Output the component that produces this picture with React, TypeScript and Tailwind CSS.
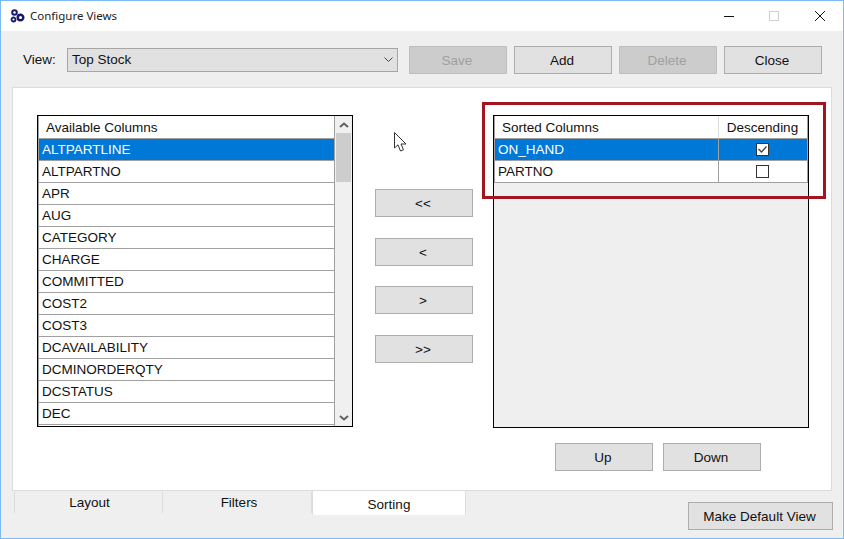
const columns = ["ALTPARTLINE","ALTPARTNO","APR","AUG","CATEGORY","CHARGE","COMMITTED","COST2","COST3","DCAVAILABILITY","DCMINORDERQTY","DCSTATUS","DEC"];

function Btn({ label, disabled, className = "" }: { label: string; disabled?: boolean; className?: string }) {
  return (
    <div className={`flex h-[28px] w-[98px] shrink-0 items-center justify-center border pr-[2px] pt-[2px] ${disabled ? "border-[#bfbfbf] bg-[#cccccc] text-[#a0a0a0]" : "border-[#adadad] bg-[#e1e1e1] text-[#111]"} ${className}`}>
      {label}
    </div>
  );
}

function Chevron({ up }: { up?: boolean }) {
  return (
    <svg width="10" height="6" viewBox="0 0 10 6" fill="none">
      <path d={up ? "M1 5 L5 1.5 L9 5" : "M1 1 L5 4.5 L9 1"} stroke="#606060" strokeWidth="2" />
    </svg>
  );
}

export default function App() {
  return (
    <div className="relative flex h-[539px] w-[844px] flex-col overflow-hidden border border-[#7db9f5] bg-[#efefef] font-['Liberation_Sans',sans-serif] text-[13.5px] text-[#111]">
      {/* Title bar */}
      <div className="flex h-[30px] shrink-0 items-center bg-white pl-[9px]">
        <svg width="15" height="14" viewBox="0 0 15 14" fill="none" stroke="#17176b">
          <circle cx="4.5" cy="3.5" r="2.3" strokeWidth="2" />
          <circle cx="3.5" cy="10.5" r="2" strokeWidth="1.8" />
          <circle cx="10.5" cy="8.5" r="2.8" strokeWidth="2.4" />
        </svg>
        <span className="ml-[5px] font-['Noto_Sans',sans-serif] text-[11.5px] text-[#222]">Configure Views</span>
        <div className="ml-auto flex items-center">
          <svg width="10" height="10" viewBox="0 0 10 10" className="mr-[35px]"><path d="M0 5.5H10" stroke="#111" strokeWidth="1" /></svg>
          <svg width="10" height="10" viewBox="0 0 10 10" className="mr-[36px]"><rect x="0.5" y="0.5" width="9" height="9" fill="none" stroke="#cfcfcf" /></svg>
          <svg width="10" height="10" viewBox="0 0 10 10" className="mr-[18px]"><path d="M0 0L10 10M10 0L0 10" stroke="#111" strokeWidth="1" /></svg>
        </div>
      </div>

      {/* Toolbar */}
      <div className="flex h-[56px] shrink-0 items-center pl-[22px] pt-[2px]">
        <span className="w-[44px] pt-px">View:</span>
        <div className="flex h-[24px] w-[331px] items-center justify-between border border-[#a6a6a6] bg-[#e1e1e1] pl-[4px] pr-[4px]">
          <span className="pt-px">Top Stock</span>
          <svg width="9" height="6" viewBox="0 0 9 6" fill="none"><path d="M0.5 0.5L4.5 4.5L8.5 0.5" stroke="#444" strokeWidth="1" /></svg>
        </div>
        <Btn label="Save" disabled className="ml-[11px]" />
        <Btn label="Add" className="ml-[7px]" />
        <Btn label="Delete" disabled className="ml-[7px]" />
        <Btn label="Close" className="ml-[7px]" />
      </div>

      {/* Panel */}
      <div className="ml-[11px] flex h-[404px] w-[820px] shrink-0 border border-[#dcdcdc] bg-white pl-[24px] pt-[27px]">
        {/* Available list */}
        <div className="flex h-[312px] w-[316px] shrink-0 border border-black bg-white">
          <div className="h-full w-[297px] overflow-hidden border-x border-[#a0a0a0]">
            <div className="flex h-[23px] items-center border-b border-[#a0a0a0] pl-[7px] pt-[2px]">Available Columns</div>
            {columns.map((c, i) => (
              <div key={c} className={`flex h-[22px] items-center border-b border-[#a0a0a0] pl-[3px] pt-[2px] ${i === 0 ? "bg-[#0078d7] text-white" : ""}`}>
                {c}
              </div>
            ))}
          </div>
          <div className="flex h-full w-[17px] flex-col bg-[#f0f0f0]">
            <div className="flex h-[17px] items-center justify-center"><Chevron up /></div>
            <div className="mx-px h-[49px] bg-[#cdcdcd]" />
            <div className="flex-1" />
            <div className="flex h-[17px] items-center justify-center"><Chevron /></div>
          </div>
        </div>

        {/* Move buttons */}
        <div className="ml-[22px] flex w-[98px] shrink-0 flex-col pt-[74px]">
          <Btn label="<<" />
          <Btn label="<" className="mt-[21px]" />
          <Btn label=">" className="mt-[20px]" />
          <Btn label=">>" className="mt-[21px]" />
        </div>

        {/* Sorted grid */}
        <div className="ml-[20px] flex w-[316px] shrink-0 flex-col">
          <div className="h-[313px] border border-black bg-[#efefef]">
            <div className="border-x border-[#a0a0a0]">
              <div className="flex h-[23px] border-b border-[#a0a0a0] bg-white">
                <div className="flex w-[224px] items-center border-r border-[#dcdcdc] pl-[7px] pt-[2px]">Sorted Columns</div>
                <div className="flex flex-1 items-center justify-center pr-[1px] pt-[2px]">Descending</div>
              </div>
              <div className="flex h-[22px] border-b border-[#a0a0a0] bg-[#0078d7] text-white">
                <div className="flex w-[224px] items-center border-r border-[#a0a0a0] pl-[3px] pt-[2px]">ON_HAND</div>
                <div className="flex flex-1 items-center justify-center pr-[2px]">
                  <div className="flex h-[13px] w-[13px] items-center justify-center border border-[#333] bg-white">
                    <svg width="11" height="11" viewBox="0 0 11 11" fill="none"><path d="M1.5 5L4.5 8L9.5 2.5" stroke="#444" strokeWidth="1.3" /></svg>
                  </div>
                </div>
              </div>
              <div className="flex h-[22px] border-b border-[#a0a0a0] bg-white">
                <div className="flex w-[224px] items-center border-r border-[#a0a0a0] pl-[3px] pt-[2px]">PARTNO</div>
                <div className="flex flex-1 items-center justify-center pr-[2px]">
                  <div className="h-[13px] w-[13px] border border-[#333] bg-white" />
                </div>
              </div>
            </div>
          </div>
          <div className="mt-[15px] flex gap-[10px] pl-[62px]">
            <Btn label="Up" />
            <Btn label="Down" />
          </div>
        </div>
      </div>

      {/* Bottom row */}
      <div className="flex flex-1 items-start justify-between pl-[13px] pr-[10px]">
        <div className="flex items-start">
          <div className="mt-px flex h-[21px] w-[149px] items-center justify-center border-x border-[#dcdcdc] pl-[2px] pt-[2px]">Layout</div>
          <div className="mt-px flex h-[21px] w-[149px] items-center justify-center border-r border-[#dcdcdc] pl-[4px] pt-[2px]">Filters</div>
          <div className="flex h-[24px] w-[154px] items-center justify-center border-x border-[#dcdcdc] bg-white pt-[5px]">Sorting</div>
        </div>
        <Btn label="Make Default View" className="mt-[11px] w-[145px]" />
      </div>

      {/* Highlight annotation */}
      <div className="pointer-events-none absolute left-[481px] top-[101px] h-[97px] w-[344px] border-[3px] border-[#a31621]" />

      {/* Mouse cursor */}
      <svg className="pointer-events-none absolute left-[393px] top-[131px]" width="13" height="20" viewBox="0 0 13 20" fill="white" stroke="#333" strokeWidth="1">
        <path d="M0.5 0.5V16L4 12.8L6.5 19L9.5 17.8L7 12H12Z" />
      </svg>
    </div>
  );
}
